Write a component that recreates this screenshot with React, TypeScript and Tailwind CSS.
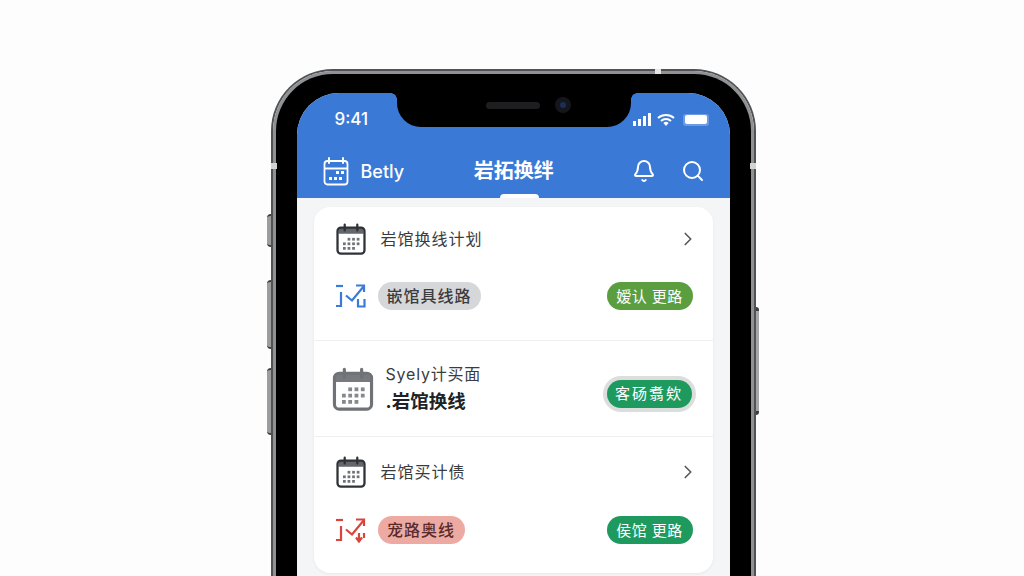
import React from 'react';
import { Bell, Search, ChevronRight } from 'lucide-react';

const cjk = "font-['Inter','Noto_Sans_CJK_SC',sans-serif]";

function CalendarIcon({ size, tone = '#2f3338', head = '#63666b', dot = '#6f7276', weight = 2 }: { size: number; tone?: string; head?: string; dot?: string; weight?: number }) {
  const dots = [
    [11, 14], [15, 14], [19, 14], [7, 18], [11, 18], [15, 18], [19, 18], [7, 22], [11, 22], [15, 22],
  ];
  return (
    <svg width={size} height={size} viewBox="0 0 26 28" fill="none" className="shrink-0">
      <path d="M2 9.500V6.500A2.500 2.500 0 0 1 4.500 4h17A2.500 2.500 0 0 1 24 6.500V9.500z" fill={head} />
      <rect x="1.200" y="4" width="23.600" height="22.800" rx="3" stroke={tone} strokeWidth={weight} />
      <path d="M7.500 1.500v5M18.500 1.500v5" stroke={tone} strokeWidth="2" strokeLinecap="round" />
      {dots.map(([x, y]) => (
        <rect key={`${x}-${y}`} x={x - 1} y={y - 1} width="2.400" height="2.400" fill={dot} />
      ))}
    </svg>
  );
}

function HeaderCalendar() {
  return (
    <svg width="26" height="30" viewBox="0 0 26 30" fill="none" stroke="#fff" className="shrink-0">
      <rect x="1.500" y="5" width="23" height="23.500" rx="3" strokeWidth="1.800" />
      <path d="M1.500 12.500h23" strokeWidth="1.800" />
      <path d="M6 2v5M20 2v5" strokeWidth="2" strokeLinecap="round" />
      <path d="M9 5h8" strokeWidth="1.800" />
      <g fill="#fff" stroke="none">
        <rect x="13" y="15" width="3" height="3" />
        <rect x="18" y="15" width="3" height="3" />
        <rect x="6" y="21" width="3" height="3" />
        <rect x="11" y="21" width="3" height="3" />
        <rect x="16" y="21" width="3" height="3" />
      </g>
    </svg>
  );
}

function RouteIcon({ color, down }: { color: string; down?: boolean }) {
  return (
    <svg width="31" height="26" viewBox="0 0 31 26" fill="none" stroke={color} strokeWidth="2.200" className="shrink-0">
      <path d="M1 3h7" />
      <path d="M6 9v14H1" />
      <path d="M11 12.500l6 5L29 3" />
      <path d="M21 2.500h8V9" />
      {down ? <path d="M24 16v8M21 20.500l3 4 3-4M29 16v5" /> : <path d="M23 16v7.500h6.500V16" />}
    </svg>
  );
}

function Pill({ label, className }: { label: string; className: string }) {
  return (
    <span className={`flex h-7 items-center justify-center rounded-full leading-none ${className}`}>
      {label}
    </span>
  );
}

function PlanRow({ label }: { label: string }) {
  return (
    <div className="flex h-9 items-center">
      <CalendarIcon size={32} />
      <span className="ml-[14px] flex-1 text-[16px] tracking-[1px] text-[#3a3c40]">{label}</span>
      <ChevronRight size={22} strokeWidth={1.8} className="mr-[-6px] text-[#55585d]" />
    </div>
  );
}

export default function App() {
  return (
    <div className={`flex h-[576px] w-[1024px] justify-center overflow-hidden bg-[#fdfdfe] pt-[69px] pl-[2px] ${cjk}`}>
      <div className="relative h-[560px] w-[485px] shrink-0">
        {/* side buttons */}
        <div className="absolute left-[-4px] top-[145px] h-[33px] w-[4px] rounded-l-sm border-y-2 border-[#3c3d3f] bg-[#9b9d9f]" />
        <div className="absolute left-[-4px] top-[211px] h-[69px] w-[4px] rounded-l-sm border-y-2 border-[#3c3d3f] bg-[#9b9d9f]" />
        <div className="absolute left-[-4px] top-[299px] h-[67px] w-[4px] rounded-l-sm border-y-2 border-[#3c3d3f] bg-[#9b9d9f]" />
        <div className="absolute right-[-3px] top-[238px] h-[108px] w-[3px] rounded-r-sm border-y-4 border-[#3c3d3f] bg-[#a3a5a7]" />

        {/* antenna bands */}
        <div className="absolute left-[384px] top-0 z-10 h-[5px] w-[6px] bg-[#e4e5e5]" />
        <div className="absolute left-0 top-[94px] z-10 h-[6px] w-[6px] bg-[#d2d3d3]" />
        <div className="absolute right-0 top-[94px] z-10 h-[6px] w-[6px] bg-[#d2d3d3]" />

        <div className="h-full rounded-t-[62px] border-[2px] border-b-0 border-[#505255]">
          <div className="h-full rounded-t-[60px] border-[3px] border-b-0 border-[#8f9193] bg-black px-[21px] pt-[19px]">
            <div className="relative h-full overflow-hidden rounded-t-[42px] bg-[#f4f5f7]">
              {/* notch */}
              <div className="absolute left-[100px] top-0 flex h-[34px] w-[234px] items-center justify-center rounded-b-[24px] bg-black pb-[10px] pl-[29px]">
                <div className="absolute left-[-6px] top-0 h-[6px] w-[6px] bg-[radial-gradient(circle_at_0_100%,transparent_5.500px,black_6px)]" />
                <div className="absolute right-[-6px] top-0 h-[6px] w-[6px] bg-[radial-gradient(circle_at_100%_100%,transparent_5.500px,black_6px)]" />
                <div className="h-[7px] w-[54px] rounded-full bg-[#1e1e20]" />
                <div className="ml-[15px] flex h-[16px] w-[16px] items-center justify-center rounded-full bg-[#14161c]">
                  <div className="h-[6px] w-[6px] rounded-full bg-[#1d2d55]" />
                </div>
              </div>

              <header className="h-[105px] bg-[#3a79d5] text-white">
                <div className="flex h-[52px] items-center justify-between pl-[38px] pr-[21px] pt-[1px]">
                  <span className="text-[17px] font-medium leading-none">9:41</span>
                  <div className="flex items-center gap-[6px]">
                    <div className="flex h-[13px] items-end gap-[2px]">
                      <div className="h-[5px] w-[3px] bg-white" />
                      <div className="h-[7px] w-[3px] bg-white" />
                      <div className="h-[10px] w-[3px] bg-white" />
                      <div className="h-[13px] w-[3px] bg-white" />
                    </div>
                    <svg width="18" height="14" viewBox="0 0 18 14" fill="none" stroke="#fff" strokeWidth="2">
                      <path d="M1 5a12 12 0 0 1 16 0M4 8a7.500 7.500 0 0 1 10 0" />
                      <path d="M9 13l2.600-3a3.600 3.600 0 0 0-5.200 0z" fill="#fff" stroke="none" />
                    </svg>
                    <div className="ml-[2px] flex h-[12px] w-[26px] items-center rounded-[3px] bg-[#6b9be2] px-[2px]">
                      <div className="h-[9px] w-full rounded-[2px] bg-white" />
                    </div>
                  </div>
                </div>
                <div className="flex h-[52px] items-center pl-[26px] pr-[25px]">
                  <HeaderCalendar />
                  <span className="ml-[12px] text-[18px] font-medium">Betly</span>
                  <span className="flex-1 pr-[8px] text-center text-[20px] font-semibold">岩拓换绊</span>
                  <Bell size={24} strokeWidth={2} />
                  <Search size={24} strokeWidth={2} className="ml-[25px]" />
                </div>
                <div className="-mt-[3px] ml-[203px] h-[4px] w-[39px] rounded-t-sm bg-white" />
              </header>

              <main className="mx-[17px] mt-[9px] rounded-2xl bg-white shadow-[0_1px_3px_rgba(0,0,0,0.06)]">
                <section className="border-b border-[#eeeff1] pb-[30px] pl-[21px] pr-[20px] pt-[14px]">
                  <PlanRow label="岩馆换线计划" />
                  <div className="mt-[25px] flex items-center">
                    <RouteIcon color="#3a7bd8" />
                    <Pill label="嵌馆具线路" className="ml-[12px] w-[103px] bg-[#d6d7d9] text-[16px] font-medium tracking-[1px] text-[#3a3c40]" />
                    <Pill label="嫒认 更路" className="ml-auto w-[86px] bg-[#5a9e3f] text-[15px] tracking-[0.5px] text-white" />
                  </div>
                </section>

                <section className="flex h-[96px] items-center border-b border-[#eeeff1] pl-[17px] pr-[21px]">
                  <CalendarIcon size={44} tone="#6f7276" head="#777a7e" dot="#85888c" />
                  <div className="ml-[11px] flex-1">
                    <p className="text-[16px] leading-[22px] tracking-[0.8px] text-[#3a3c40]">Syely计买面</p>
                    <p className="mt-[3px] text-[18.5px] font-bold leading-[26px] text-[#202225]">.岩馆换线</p>
                  </div>
                  <Pill label="客砀翥欸" className="mt-[10px] w-[85px] bg-[#1f9a5f] text-[15px] tracking-[2px] text-white ring-4 ring-[#dcdedd]" />
                </section>

                <section className="pb-[29px] pl-[21px] pr-[20px] pt-[17px]">
                  <PlanRow label="岩馆买计债" />
                  <div className="mt-[26px] flex items-center">
                    <RouteIcon color="#d8453c" down />
                    <Pill label="宠路奥线" className="ml-[12px] w-[87px] bg-[#edaaa3] text-[16px] font-medium tracking-[1px] text-[#5b2a2a]" />
                    <Pill label="侯馆 更路" className="ml-auto w-[86px] bg-[#1f9a5f] text-[15px] tracking-[0.5px] text-white" />
                  </div>
                </section>
              </main>
            </div>
          </div>
        </div>
      </div>
    </div>
  );
}
